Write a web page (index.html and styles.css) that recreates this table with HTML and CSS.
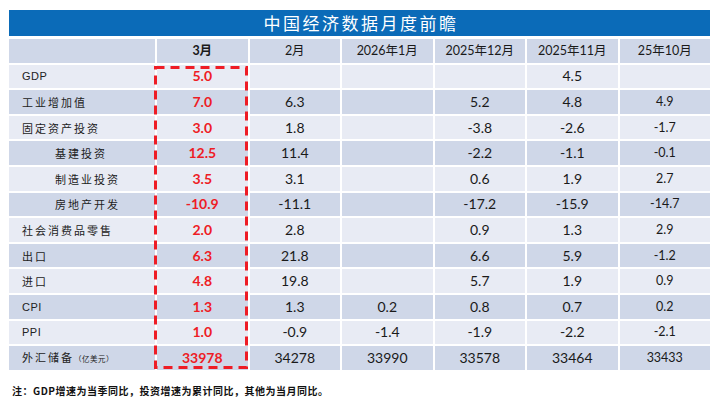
FILE: index.html
```html
<!DOCTYPE html>
<html lang="zh">
<head>
<meta charset="utf-8">
<title>中国经济数据月度前瞻</title>
<link rel="stylesheet" href="styles.css">
</head>
<body>
<div class="page">
  <div class="title">中国经济数据月度前瞻</div>
  <div class="table-wrap">
    <table class="data">
      <colgroup>
        <col class="c-label"><col class="c-num"><col class="c-num"><col class="c-num"><col class="c-num"><col class="c-num"><col class="c-num">
      </colgroup>
      <thead>
        <tr class="dark">
          <th></th><th class="bold">3月</th><th>2月</th><th>2026年1月</th><th>2025年12月</th><th>2025年11月</th><th>25年10月</th>
        </tr>
      </thead>
      <tbody>
        <tr class="light"><td class="lbl latin">GDP</td><td class="red">5.0</td><td></td><td></td><td></td><td>4.5</td><td class="sm"></td></tr>
        <tr class="dark"><td class="lbl">工业增加值</td><td class="red">7.0</td><td>6.3</td><td></td><td>5.2</td><td>4.8</td><td class="sm">4.9</td></tr>
        <tr class="light"><td class="lbl">固定资产投资</td><td class="red">3.0</td><td>1.8</td><td></td><td>-3.8</td><td>-2.6</td><td class="sm">-1.7</td></tr>
        <tr class="dark"><td class="lbl sub">基建投资</td><td class="red">12.5</td><td>11.4</td><td></td><td>-2.2</td><td>-1.1</td><td class="sm">-0.1</td></tr>
        <tr class="light"><td class="lbl sub">制造业投资</td><td class="red">3.5</td><td>3.1</td><td></td><td>0.6</td><td>1.9</td><td class="sm">2.7</td></tr>
        <tr class="dark"><td class="lbl sub">房地产开发</td><td class="red">-10.9</td><td>-11.1</td><td></td><td>-17.2</td><td>-15.9</td><td class="sm">-14.7</td></tr>
        <tr class="light"><td class="lbl">社会消费品零售</td><td class="red">2.0</td><td>2.8</td><td></td><td>0.9</td><td>1.3</td><td class="sm">2.9</td></tr>
        <tr class="dark"><td class="lbl">出口</td><td class="red">6.3</td><td>21.8</td><td></td><td>6.6</td><td>5.9</td><td class="sm">-1.2</td></tr>
        <tr class="light"><td class="lbl">进口</td><td class="red">4.8</td><td>19.8</td><td></td><td>5.7</td><td>1.9</td><td class="sm">0.9</td></tr>
        <tr class="dark"><td class="lbl latin">CPI</td><td class="red">1.3</td><td>1.3</td><td>0.2</td><td>0.8</td><td>0.7</td><td class="sm">0.2</td></tr>
        <tr class="light"><td class="lbl latin">PPI</td><td class="red">1.0</td><td>-0.9</td><td>-1.4</td><td>-1.9</td><td>-2.2</td><td class="sm">-2.1</td></tr>
        <tr class="dark"><td class="lbl">外汇储备<span class="unit">（亿美元）</span></td><td class="red">33978</td><td>34278</td><td>33990</td><td>33578</td><td>33464</td><td class="sm">33433</td></tr>
      </tbody>
    </table>
    <svg class="highlight" width="94" height="303" viewBox="0 0 94 303">
      <rect x="1.5" y="1.5" width="91" height="300" fill="none" stroke="#ee1c25" stroke-width="3" stroke-dasharray="9 6"/>
    </svg>
  </div>
  <p class="note">注：GDP增速为当季同比，投资增速为累计同比，其他为当月同比。</p>
</div>
</body>
</html>
```

FILE: styles.css
```css
html, body {
  margin: 0;
  padding: 0;
  background: #ffffff;
}

.page {
  padding: 10px 0 0 9px;
  width: 701px;
}

.title {
  height: 26px;
  background: #0b6bb8;
  color: #ffffff;
  font-family: "Noto Sans CJK SC", sans-serif;
  font-size: 17px;
  letter-spacing: 2.5px;
  line-height: 26px;
  text-align: center;
  padding-left: 3px;
}

.table-wrap {
  position: relative;
  margin-top: 1px;
}

.data {
  border-collapse: separate;
  border-spacing: 0;
  width: 701px;
  table-layout: fixed;
  font-family: Lato, "Noto Sans CJK SC", sans-serif;
  font-size: 14px;
  color: #1a1a1a;
}

.c-label { width: 146px; }
.c-num { width: 92.5px; }

.data tr {
  height: 25.6px;
}

.data th,
.data td {
  padding: 0;
  text-align: center;
  border-top: 2px solid #ffffff;
  border-left: 2px solid #ffffff;
  line-height: 20px;
}

.data th:first-child,
.data td:first-child {
  border-left: 0;
}

.data th {
  font-weight: normal;
  font-size: 12.5px;
}

.data th.bold {
  font-weight: bold;
}

.dark th, .dark td { background: #cfd7e8; }
.light td { background: #e8ebf4; }

.lbl {
  text-align: left !important;
  padding-left: 13px !important;
  font-family: "Noto Sans CJK SC", sans-serif;
  font-size: 11px;
  letter-spacing: 2px;
  color: #222222;
}

.lbl.sub {
  padding-left: 46px !important;
}

.lbl.latin {
  font-family: "Liberation Sans", sans-serif;
  font-size: 11px;
  letter-spacing: 0.5px;
}

.unit {
  font-size: 7.5px;
  letter-spacing: 0.5px;
}

.red {
  color: #ee1c25;
  font-weight: bold;
}

.sm {
  font-size: 12.5px;
}

.highlight {
  position: absolute;
  left: 145px;
  top: 29px;
}

.note {
  margin: 13px 0 0 3px;
  font-family: "Noto Sans CJK SC", sans-serif;
  font-weight: bold;
  font-size: 10px;
  letter-spacing: 0.5px;
  color: #111111;
}
```
